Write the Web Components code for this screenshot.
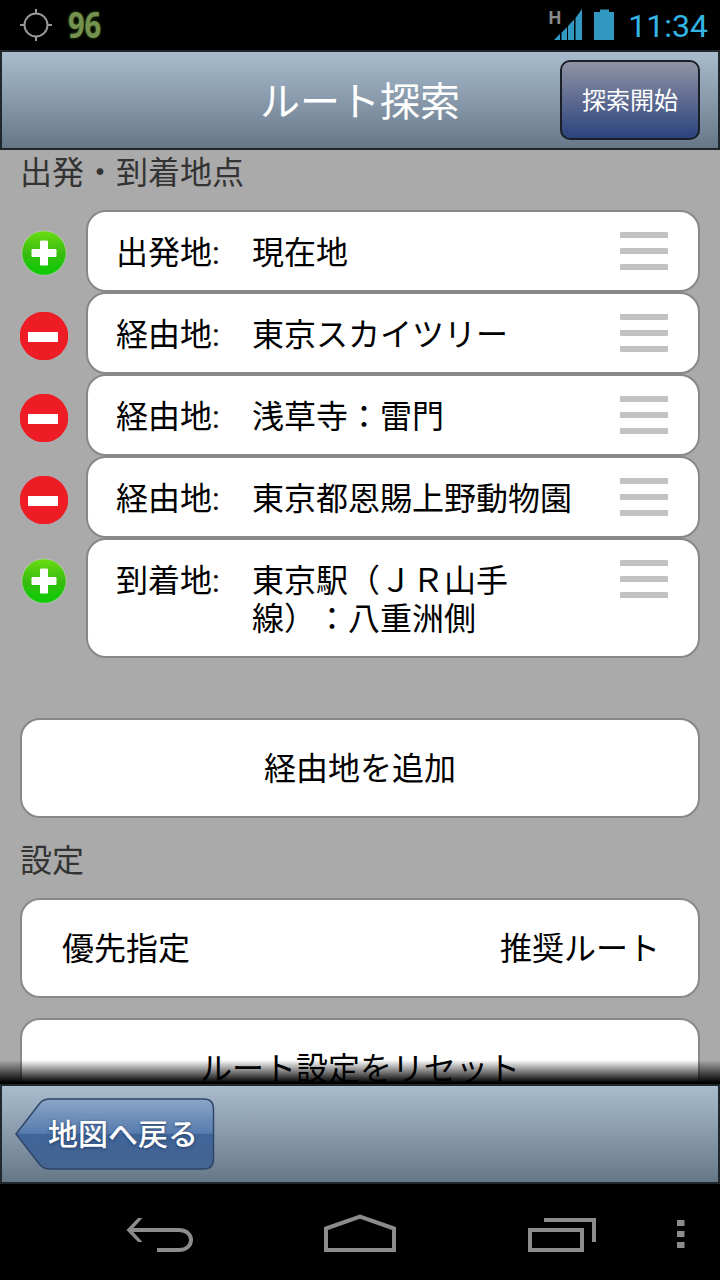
<!DOCTYPE html>
<html lang="ja">
<head>
<meta charset="utf-8">
<title>ルート探索</title>
<style>
html, body { margin: 0; padding: 0; }
body {
  width: 720px;
  height: 1280px;
  overflow: hidden;
  background: #000;
  font-family: Roboto, "Noto Sans CJK JP", sans-serif;
  font-size: 32px;
  line-height: 38px;
  text-spacing-trim: space-all;
}
</style>
</head>
<body>
<route-app></route-app>

<script>
// attach an open shadow root filled from the template
function define(name, html) {
  const template = document.createElement("template");
  template.innerHTML = html;
  customElements.define(name, class extends HTMLElement {
    constructor() {
      super();
      this.attachShadow({ mode: "open" }).appendChild(template.content.cloneNode(true));
    }
  });
}

// Android status bar
define("status-bar", `
<style>
:host { display: flex; align-items: center; height: 50px; padding: 0 12px 0 20px; background: #000; color: #33b5e5; }
svg { display: block; }
.temp {
  margin-left: 16px;
  font: bold 35px/50px "Open Sans", sans-serif;
  color: #74914f;
  transform: scaleX(.83);
  transform-origin: 0 50%;
  text-shadow: 0 0 3px #3c6a18;
}
.right { display: flex; align-items: center; margin-left: auto; }
.net { display: flex; }
.h { font: bold 18px/18px Roboto, sans-serif; color: #8a8a8a; }
.signal { margin-left: -7px; }
.battery { margin-left: 12px; }
.time { margin-left: 14px; line-height: 50px; padding-top: 1px; }
</style>
<svg width="32" height="32" viewBox="0 0 32 32" fill="none" stroke="#999" stroke-width="2">
  <circle cx="16" cy="16" r="11.5"/>
  <path d="M16 0v5M16 27v5M0 16h5M27 16h5"/>
</svg>
<span class="temp">96</span>
<div class="right">
  <div class="net">
    <span class="h">H</span>
    <svg class="signal" width="28" height="32" viewBox="0 0 28 32" fill="#3198c2">
      <path d="M0 31L6 24.800V31zM7.500 23.800L13 18V31H7.500zM14 16.900L20 10.500V31h-6zM21.500 9L28 0V31h-6.500z"/>
    </svg>
  </div>
  <svg class="battery" width="20" height="32" viewBox="0 0 20 32" fill="#3198c2">
    <path d="M0 3h6V.500h9V3h5V31H0z"/>
  </svg>
  <span class="time">11:34</span>
</div>`);

// bar with the blue-grey gradient, used at the top and at the bottom
define("tool-bar", `
<style>
:host {
  display: grid;
  grid-template-columns: 1fr auto 1fr;
  align-items: center;
  box-sizing: border-box;
  height: 100px;
  flex: none;
  padding: 0 18px 0 13px;
  border: 2px solid #20272d;
  background: linear-gradient(#a9bccd, #667788);
  color: #fff;
}
.title { font-size: 40px; line-height: 60px; padding: 5px 0 0 5px; }
.end { justify-self: end; }
</style>
<slot name="start"><span></span></slot>
<span class="title"><slot></slot></span>
<span class="end"><slot name="end"></slot></span>`);

define("action-button", `
<style>
:host {
  display: flex;
  align-items: center;
  justify-content: center;
  box-sizing: border-box;
  width: 140px;
  height: 80px;
  padding-top: 2px;
  border: 2px solid #1b2028;
  border-radius: 10px;
  background: linear-gradient(#9093a5, #2b437d);
  color: #fff;
  font-size: 24px;
}
</style>
<slot></slot>`);

// arrow shaped back button
define("back-button", `
<style>
:host { display: grid; width: 200px; height: 74px; color: #fff; margin-top: -1px; }
svg, span { grid-area: 1 / 1; }
span { padding: 19px 0 0 33px; font-size: 30px; font-weight: 500; text-shadow: 0 1px 3px #223c68; white-space: nowrap; }
</style>
<svg width="200" height="74" viewBox="0 0 200 74">
  <defs>
    <linearGradient id="fill" x1="0" y1="0" x2="0" y2="1">
      <stop offset="0" stop-color="#8ba5c7"/>
      <stop offset=".49" stop-color="#577cae"/>
      <stop offset=".5" stop-color="#3f6599"/>
      <stop offset="1" stop-color="#456491"/>
    </linearGradient>
  </defs>
  <path d="M1 37L25 6Q29 2 34 2H189Q198.500 2 198.500 12V62Q198.500 72 189 72H34Q29 72 25 68Z" fill="url(#fill)" stroke="#2f4668" stroke-width="1.500"/>
</svg>
<span><slot></slot></span>`);

define("section-title", `
<style>
:host { display: block; padding: 0 20px; color: #333; }
</style>
<slot></slot>`);

define("white-card", `
<style>
:host {
  display: flex;
  align-items: center;
  justify-content: center;
  box-sizing: border-box;
  height: 100px;
  flex: none;
  margin: 0 20px;
  padding: 1px 40px 0;
  border: 2px solid #888;
  border-radius: 20px;
  background: #fff;
  color: #000;
}
:host([split]) { justify-content: space-between; padding-right: 38px; }
</style>
<slot></slot>`);

// one stop of the route: add/remove icon, label, place and drag handle
const ICONS = {
  add: `
<svg width="48" height="48" viewBox="0 0 48 48">
  <defs>
    <linearGradient id="green" x1="0" y1="0" x2="0" y2="1">
      <stop offset="0" stop-color="#69dc10"/>
      <stop offset=".5" stop-color="#38bd10"/>
      <stop offset="1" stop-color="#0bcb05"/>
    </linearGradient>
  </defs>
  <circle cx="24" cy="24" r="22.500" fill="#b2cfa9"/>
  <circle cx="24" cy="24" r="21.800" fill="url(#green)"/>
  <path d="M20.500 12h7v8.500H36v7h-8.500V36h-7v-8.500H12v-7h8.500z" fill="#fff" stroke="#fff" stroke-linejoin="round"/>
</svg>`,
  remove: `
<svg width="48" height="48" viewBox="0 0 48 48">
  <circle cx="24" cy="24" r="24.300" fill="#ee1c25"/>
  <path d="M8 20h30v10H8z" fill="#fff"/>
</svg>`
};

customElements.define("route-stop", class extends HTMLElement {
  connectedCallback() {
    const icon = this.getAttribute("icon");
    this.attachShadow({ mode: "open" }).innerHTML = `
<style>
:host { display: flex; padding: 0 20px; }
.icon { width: 66px; flex: none; padding-top: ${icon === "add" ? 19 : 20}px; }
.icon svg { display: block; }
.box {
  display: flex;
  flex: 1;
  box-sizing: border-box;
  min-height: 82px;
  padding: 20px 30px 16px 28px;
  border: 2px solid #888;
  border-radius: 20px;
  background: #fff;
  color: #000;
}
:host([tall]) .box { min-height: 120px; }
.label, .place { flex: none; padding-top: 2px; }
.label { width: 136px; }
.place { width: 284px; }
/* long names run up to the handle */
:host([wide]) .place { width: 330px; }
.handle { display: flex; flex-direction: column; gap: 10px; margin-left: auto; }
.handle i { width: 48px; height: 6px; background: #c2c2c2; }
</style>
<div class="icon">${ICONS[icon]}</div>
<div class="box">
  <span class="label">${this.getAttribute("label")}:</span>
  <span class="place"><slot></slot></span>
  <span class="handle"><i></i><i></i><i></i></span>
</div>`;
  }
});

// Android navigation bar
define("nav-bar", `
<style>
:host { display: flex; height: 96px; background: #000; }
svg { display: block; }
</style>
<svg width="720" height="96" viewBox="0 0 720 96" fill="none" stroke="#8c8c8c" stroke-width="4">
  <path d="M130 46H179C195 46 195 66 179 66H157"/>
  <path d="M126.500 46L138 34h4.500L131.500 46L142.500 58H138z" fill="#8c8c8c" stroke="none"/>
  <path d="M326 66V44.500L360 32.500L394 44.500V66Z"/>
  <path d="M530 46H582V66H530ZM544 36H594V58"/>
  <path d="M677 36h7.500v6H677zM677 47h7.500v6H677zM677 58h7.500v6H677z" fill="#8c8c8c" stroke="none"/>
</svg>`);

define("route-app", `
<style>
:host { display: flex; flex-direction: column; width: 720px; height: 1280px; }
main {
  display: flex;
  flex-direction: column;
  position: relative;
  height: 934px;
  overflow: hidden;
  background: #aaa;
}
.stops { display: flex; flex-direction: column; margin: 18px 0 60px; }
section-title { margin-top: 4px; }
.settings { margin: 24px 0 18px; }
.reset { margin-top: 20px; }
/* shade over the cut-off end of the list */
.shade { position: absolute; left: 0; right: 0; bottom: 0; height: 24px; background: linear-gradient(transparent, #000 94%); }
</style>
<status-bar></status-bar>
<tool-bar>ルート探索<action-button slot="end">探索開始</action-button></tool-bar>
<main>
  <section-title>出発・到着地点</section-title>
  <div class="stops">
    <route-stop icon="add" label="出発地">現在地</route-stop>
    <route-stop icon="remove" label="経由地">東京スカイツリー</route-stop>
    <route-stop icon="remove" label="経由地">浅草寺：雷門</route-stop>
    <route-stop icon="remove" label="経由地" wide>東京都恩賜上野動物園</route-stop>
    <route-stop icon="add" label="到着地" tall>東京駅（ＪＲ山手線）：八重洲側</route-stop>
  </div>
  <white-card>経由地を追加</white-card>
  <section-title class="settings">設定</section-title>
  <white-card split><span>優先指定</span><span>推奨ルート</span></white-card>
  <white-card class="reset">ルート設定をリセット</white-card>
  <div class="shade"></div>
</main>
<tool-bar><back-button slot="start">地図へ戻る</back-button></tool-bar>
<nav-bar></nav-bar>`);
</script>
</body>
</html>
